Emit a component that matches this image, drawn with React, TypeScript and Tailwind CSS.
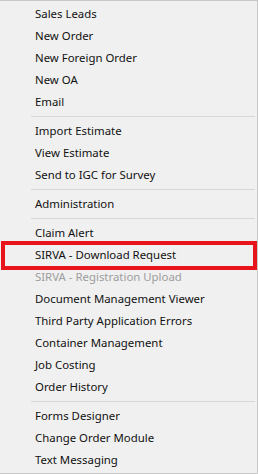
const groups: { label: string; disabled?: boolean; boxed?: boolean }[][] = [
  [
    { label: 'Sales Leads' },
    { label: 'New Order' },
    { label: 'New Foreign Order' },
    { label: 'New OA' },
    { label: 'Email' },
  ],
  [{ label: 'Import Estimate' }, { label: 'View Estimate' }, { label: 'Send to IGC for Survey' }],
  [{ label: 'Administration' }],
  [
    { label: 'Claim Alert' },
    { label: 'SIRVA - Download Request', boxed: true },
    { label: 'SIRVA - Registration Upload', disabled: true },
    { label: 'Document Management Viewer' },
    { label: 'Third Party Application Errors' },
    { label: 'Container Management' },
    { label: 'Job Costing' },
    { label: 'Order History' },
  ],
  [{ label: 'Forms Designer' }, { label: 'Change Order Module' }, { label: 'Text Messaging' }],
];

export default function App() {
  return (
    <div
      className="w-[258px] h-[474px] bg-[#f0f0f0] border-t border-r border-b border-[#c8c8c8] pt-[2px] text-[11.4px]"
      style={{ fontFamily: "'Noto Sans', sans-serif" }}
    >
      {groups.map((group, gi) => (
        <div key={gi}>
          {gi > 0 && (
            <div className="h-[7px] flex items-center pl-[31px] pr-[2px]">
              <div className="h-px w-full bg-[#d7d7d7]" />
            </div>
          )}
          {group.map((item) => (
            <div key={item.label} className="relative h-[22px] flex items-center pl-[35px]">
              <span className={item.disabled ? 'text-[#9d9d9d]' : 'text-[#111]'}>{item.label}</span>
              {item.boxed && (
                <div className="absolute left-[1px] right-[0px] top-[-3px] bottom-[-4px] border-[4px] border-[#e8141c]" />
              )}
            </div>
          ))}
        </div>
      ))}
    </div>
  );
}
